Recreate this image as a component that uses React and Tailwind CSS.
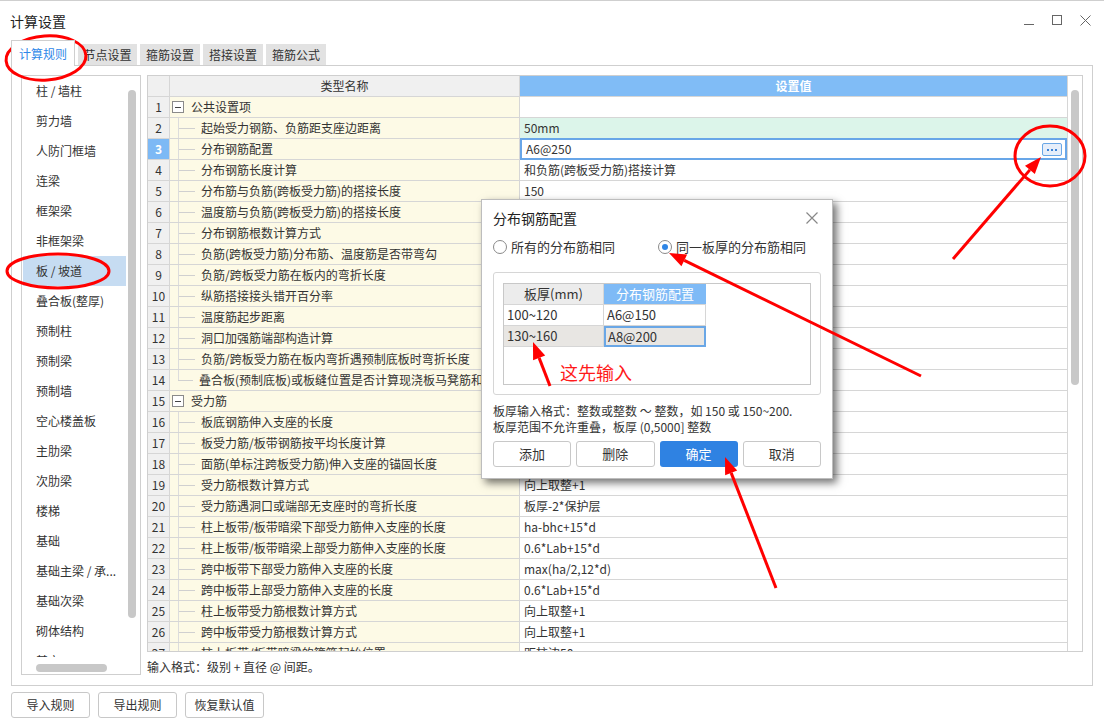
const sideItems = [
  "柱 / 墙柱", "剪力墙", "人防门框墙", "连梁", "框架梁", "非框架梁", "板 / 坡道", "叠合板(整厚)",
  "预制柱", "预制梁", "预制墙", "空心楼盖板", "主肋梁", "次肋梁", "楼梯", "基础",
  "基础主梁 / 承...", "基础次梁", "砌体结构", "其它",
];

const rows = [
  { g: true, name: "公共设置项", v: "" },
  { name: "起始受力钢筋、负筋距支座边距离", v: "50mm" },
  { name: "分布钢筋配置", v: "A6@250" },
  { name: "分布钢筋长度计算", v: "和负筋(跨板受力筋)搭接计算" },
  { name: "分布筋与负筋(跨板受力筋)的搭接长度", v: "150" },
  { name: "温度筋与负筋(跨板受力筋)的搭接长度", v: "" },
  { name: "分布钢筋根数计算方式", v: "" },
  { name: "负筋(跨板受力筋)分布筋、温度筋是否带弯勾", v: "" },
  { name: "负筋/跨板受力筋在板内的弯折长度", v: "" },
  { name: "纵筋搭接接头错开百分率", v: "" },
  { name: "温度筋起步距离", v: "" },
  { name: "洞口加强筋端部构造计算", v: "" },
  { name: "负筋/跨板受力筋在板内弯折遇预制底板时弯折长度", v: "" },
  { name: "叠合板(预制底板)或板缝位置是否计算现浇板马凳筋和温度筋", v: "", last: true },
  { g: true, name: "受力筋", v: "" },
  { name: "板底钢筋伸入支座的长度", v: "" },
  { name: "板受力筋/板带钢筋按平均长度计算", v: "" },
  { name: "面筋(单标注跨板受力筋)伸入支座的锚固长度", v: "" },
  { name: "受力筋根数计算方式", v: "向上取整+1" },
  { name: "受力筋遇洞口或端部无支座时的弯折长度", v: "板厚-2*保护层" },
  { name: "柱上板带/板带暗梁下部受力筋伸入支座的长度", v: "ha-bhc+15*d" },
  { name: "柱上板带/板带暗梁上部受力筋伸入支座的长度", v: "0.6*Lab+15*d" },
  { name: "跨中板带下部受力筋伸入支座的长度", v: "max(ha/2,12*d)" },
  { name: "跨中板带上部受力筋伸入支座的长度", v: "0.6*Lab+15*d" },
  { name: "柱上板带受力筋根数计算方式", v: "向上取整+1" },
  { name: "跨中板带受力筋根数计算方式", v: "向上取整+1" },
  { name: "柱上板带/板带暗梁的箍筋起始位置", v: "距柱边50mm" },
];

function Arrow({ x1, y1, x2, y2 }) {
  const a = Math.atan2(y2 - y1, x2 - x1);
  const L = 17, W = 6.5;
  const bx = x2 - L * Math.cos(a), by = y2 - L * Math.sin(a);
  const px = -Math.sin(a) * W, py = Math.cos(a) * W;
  return (
    <g>
      <line x1={x1} y1={y1} x2={bx} y2={by} stroke="#ff0000" strokeWidth="3" />
      <polygon points={`${x2},${y2} ${bx + px},${by + py} ${bx - px},${by - py}`} fill="#ff0000" />
    </g>
  );
}

function TableRow({ r, i }) {
  const sel = i === 2;
  return (
    <div className="flex h-[21px] shrink-0 border-b border-[#d6d6d6]">
      <div className={`w-[22px] shrink-0 flex items-center justify-center border-r border-[#d6d6d6] ${sel ? "bg-[#7db9f5] text-white font-bold" : "bg-[#f0f0f0] text-[#333]"}`}>
        {i + 1}
      </div>
      <div className="w-[350px] shrink-0 relative flex items-center bg-[#fdfae6] border-r border-[#d6d6d6] overflow-hidden whitespace-nowrap">
        {r.g ? (
          <>
            <div className="ml-[2px] w-[12px] h-[12px] border border-[#8a8a8a] bg-white flex items-center justify-center">
              <div className="w-[6px] h-px bg-[#444]" />
            </div>
            <span className="ml-[7px]">{r.name}</span>
          </>
        ) : (
          <>
            <div className={`absolute left-[8px] top-0 w-px bg-[#dcdcdc] ${r.last ? "h-[10px]" : "h-[21px]"}`} />
            <div className="ml-[8px] w-[17px] h-px bg-[#d0d0d0]" />
            <span className="ml-[6px]">{r.name}</span>
          </>
        )}
      </div>
      <div className={`flex-1 relative flex items-center pl-[4px] ${i === 1 ? "bg-[#dcf5ea]" : "bg-white"}`}>
        {sel && <div className="absolute -top-px left-0 right-0 -bottom-px border-2 border-[#68a6e8]" />}
        <span className={sel ? "ml-[2px]" : ""}>{r.v}</span>
        {sel && (
          <div className="absolute right-[5px] top-[4px] w-[20px] h-[13px] rounded-[2px] border border-[#6aa7e6] bg-[#e6eefa] flex items-center justify-center gap-[2px]">
            <div className="w-[2px] h-[2px] bg-[#3b82d6]" />
            <div className="w-[2px] h-[2px] bg-[#3b82d6]" />
            <div className="w-[2px] h-[2px] bg-[#3b82d6]" />
          </div>
        )}
      </div>
    </div>
  );
}

export default function App() {
  return (
    <div className="relative w-[1104px] h-[719px] overflow-hidden bg-white border-t border-[#cfcfcf] text-[12px] leading-[16px] text-[#333] font-['Microsoft_YaHei','Noto_Sans_CJK_SC',sans-serif]">
      {/* title bar */}
      <div className="h-[39px] flex items-center justify-between pl-[10px] pr-[12px]">
        <span className="text-[14px] text-[#222]">计算设置</span>
        <div className="flex items-center gap-[15px] text-[#777]">
          <svg width="13" height="13" viewBox="0 0 13 13"><line x1="1" y1="10.5" x2="11" y2="10.5" stroke="#666" strokeWidth="1" /></svg>
          <svg width="13" height="13" viewBox="0 0 13 13"><rect x="1.5" y="1.5" width="9" height="9" fill="none" stroke="#666" strokeWidth="1" /></svg>
          <svg width="13" height="13" viewBox="0 0 13 13"><path d="M1.5 1.5 L11.5 11.5 M11.5 1.5 L1.5 11.5" stroke="#666" strokeWidth="1" /></svg>
        </div>
      </div>

      {/* tabs */}
      <div className="h-[25px] flex items-end pl-[11px] gap-[3px]">
        <div className="h-[26px] w-[64px] -mb-px z-10 bg-white border border-b-0 border-[#cfcfcf] flex items-center justify-center text-[#2f88e8]">计算规则</div>
        <div className="h-[21px] w-[59px] bg-[#e2e2e2] flex items-center justify-center">节点设置</div>
        <div className="h-[21px] w-[60px] bg-[#e2e2e2] flex items-center justify-center">箍筋设置</div>
        <div className="h-[21px] w-[60px] bg-[#e2e2e2] flex items-center justify-center">搭接设置</div>
        <div className="h-[21px] w-[60px] bg-[#e2e2e2] flex items-center justify-center">箍筋公式</div>
      </div>

      {/* content */}
      <div className="ml-[11px] w-[1082px] h-[621px] border border-[#cfcfcf] flex gap-[6px] pt-[9px] pl-[9px]">
        {/* left list */}
        <div className="w-[120px] h-[600px] border border-[#cfcfcf] flex flex-col">
          <div className="h-[581px] flex overflow-hidden">
            <div className="flex-1 flex flex-col pl-px">
              {sideItems.map((s, i) => (
                <div key={i} className={`h-[30px] shrink-0 flex items-center pl-[13px] whitespace-nowrap ${i === 6 ? "bg-[#c6dcf2]" : ""}`}>{s}</div>
              ))}
            </div>
            <div className="w-[14px] shrink-0 pt-[14px] pl-[2px]">
              <div className="w-[8px] h-[528px] rounded-full bg-[#c8c8c8]" />
            </div>
          </div>
          <div className="flex-1 pl-[14px] pt-[7px]">
            <div className="w-[71px] h-[8px] rounded-full bg-[#c8c8c8]" />
          </div>
        </div>

        {/* right: table */}
        <div className="flex flex-col">
          <div className="w-[936px] h-[577px] border border-[#cfcfcf] flex overflow-hidden">
            <div className="w-[920px] shrink-0 border-r border-[#d6d6d6] flex flex-col">
              <div className="flex h-[21px] shrink-0 border-b border-[#d6d6d6]">
                <div className="w-[22px] bg-[#f0f0f0] border-r border-[#d6d6d6]" />
                <div className="w-[350px] bg-[#f0f0f0] border-r border-[#d6d6d6] flex items-center justify-center">类型名称</div>
                <div className="flex-1 bg-[#80bcf6] text-white font-bold flex items-center justify-center">设置值</div>
              </div>
              {rows.map((r, i) => <TableRow key={i} r={r} i={i} />)}
            </div>
            <div className="flex-1 pt-[14px] pl-[3px]">
              <div className="w-[8px] h-[295px] rounded-full bg-[#c8c8c8]" />
            </div>
          </div>
          <div className="mt-[7px]">输入格式：级别 + 直径 @ 间距。</div>
        </div>
      </div>

      {/* bottom buttons */}
      <div className="flex gap-[8px] ml-[11px] mt-[6px]">
        {["导入规则", "导出规则", "恢复默认值"].map((b) => (
          <div key={b} className="w-[79px] h-[26px] rounded-[3px] border border-[#c8c8c8] bg-white flex items-center justify-center">{b}</div>
        ))}
      </div>

      {/* dialog */}
      <div className="absolute left-[481px] top-[198px] w-[352px] h-[280px] bg-white border border-[#bdbdbd] shadow-[4px_4px_8px_rgba(0,0,0,0.55)] px-[11px]">
        <div className="h-[36px] flex items-center justify-between">
          <span className="text-[14px] text-[#222]">分布钢筋配置</span>
          <svg width="14" height="14" viewBox="0 0 14 14" className="mr-[2px]"><path d="M1.5 1.5 L12.5 12.5 M12.5 1.5 L1.5 12.5" stroke="#888" strokeWidth="1.2" /></svg>
        </div>
        <div className="mt-px h-[20px] flex items-center text-[13px]">
          <div className="w-[14px] h-[14px] rounded-full border border-[#8a8a8a] bg-white" />
          <span className="ml-[4px]">所有的分布筋相同</span>
          <div className="ml-[43px] w-[14px] h-[14px] rounded-full border border-[#8a8a8a] bg-white flex items-center justify-center">
            <div className="w-[6px] h-[6px] rounded-full bg-[#2f86e6]" />
          </div>
          <span className="ml-[4px]">同一板厚的分布筋相同</span>
        </div>
        <div className="mt-[15px] w-[328px] h-[123px] rounded-[3px] border border-[#d6d6d6] pt-[10px] pl-[9px]">
          <div className="w-[308px] h-[102px] border border-[#c8c8c8] text-[13px]">
            <div className="flex h-[21px]">
              <div className="w-[100px] bg-[#ececec] border-r border-b border-[#d6d6d6] flex items-center justify-center">板厚(mm)</div>
              <div className="w-[102px] bg-[#7ebaf6] text-white border-b border-[#d6d6d6] flex items-center justify-center">分布钢筋配置</div>
            </div>
            <div className="flex h-[21px]">
              <div className="w-[100px] border-r border-b border-[#d6d6d6] flex items-center pl-[3px]">100~120</div>
              <div className="w-[102px] border-r border-b border-[#d6d6d6] flex items-center pl-[3px]">A6@150</div>
            </div>
            <div className="flex h-[21px]">
              <div className="w-[100px] bg-[#e8e6e3] border-r border-b border-[#d6d6d6] flex items-center pl-[3px]">130~160</div>
              <div className="w-[102px] bg-[#e8e6e3] border-2 border-[#6aa7e6] flex items-center pl-[2px]">A8@200</div>
            </div>
            <div className="ml-[56px] mt-[14px] text-[18px] leading-[22px] text-[#ff1a1a]">这先输入</div>
          </div>
        </div>
        <div className="mt-[8px] leading-[16px] text-[12px]">
          <div>板厚输入格式：整数或整数 ～ 整数，如 150 或 150~200.</div>
          <div>板厚范围不允许重叠，板厚 (0,5000] 整数</div>
        </div>
        <div className="mt-[6px] flex gap-[5px] text-[13px]">
          <div className="w-[79px] h-[26px] rounded-[3px] border border-[#c8c8c8] flex items-center justify-center">添加</div>
          <div className="w-[79px] h-[26px] rounded-[3px] border border-[#c8c8c8] flex items-center justify-center">删除</div>
          <div className="w-[79px] h-[26px] rounded-[3px] bg-[#2f82e2] text-white flex items-center justify-center">确定</div>
          <div className="w-[79px] h-[26px] rounded-[3px] border border-[#c8c8c8] flex items-center justify-center">取消</div>
        </div>
      </div>

      {/* annotations */}
      <svg className="absolute inset-0 pointer-events-none" width="1104" height="719">
        <ellipse cx="46" cy="57" rx="40" ry="22" fill="none" stroke="#ff0000" strokeWidth="3" transform="rotate(-4 46 57)" />
        <ellipse cx="58" cy="270" rx="51" ry="17" fill="none" stroke="#ff0000" strokeWidth="3" />
        <ellipse cx="1050" cy="155" rx="35" ry="30" fill="none" stroke="#ff0000" strokeWidth="3" />
        <Arrow x1={953} y1={258} x2={1041} y2={156} />
        <Arrow x1={921} y1={375} x2={669} y2={252} />
        <Arrow x1={776} y1={587} x2={725} y2={456} />
        <Arrow x1={550} y1={385} x2={533} y2={341} />
      </svg>
    </div>
  );
}
